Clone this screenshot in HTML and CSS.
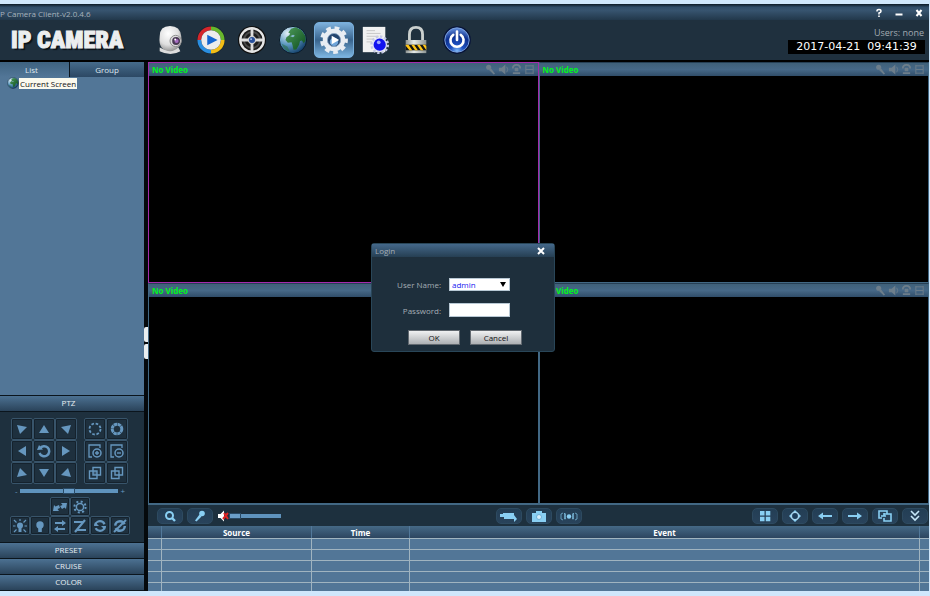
FILE: index.html
```html
<!DOCTYPE html>
<html lang="en">
<head>
    <meta charset="UTF-8">
    <meta name="viewport" content="width=device-width, initial-scale=1.0">
    <title>IP Camera Client</title>
    <link rel="stylesheet" href="styles.css">
</head>
<body>

<!-- shared icon shapes -->
<svg class="defs" width="0" height="0">
    <defs>
        <radialGradient id="blue-ball" cx="50%" cy="95%" r="90%">
            <stop offset="0" stop-color="#7fb8f5"/><stop offset=".3" stop-color="#1c4fc0"/><stop offset=".7" stop-color="#0d2f8c"/><stop offset="1" stop-color="#5c86d6"/>
        </radialGradient>
        <radialGradient id="white-ball" cx="40%" cy="30%" r="75%">
            <stop offset="0" stop-color="#fff"/><stop offset=".6" stop-color="#dedede"/><stop offset="1" stop-color="#8a8a8a"/>
        </radialGradient>
        <radialGradient id="sea" cx="30%" cy="25%" r="85%">
            <stop offset="0" stop-color="#e4f1f8"/><stop offset=".5" stop-color="#5c98c0"/><stop offset="1" stop-color="#0b3560"/>
        </radialGradient>
        <linearGradient id="land" x1="0" y1="0" x2="1" y2="1">
            <stop offset="0" stop-color="#4f9c5c"/><stop offset="1" stop-color="#0c4d1c"/>
        </linearGradient>
        <linearGradient id="steel" x1="0" y1="0" x2="1" y2="0">
            <stop offset="0" stop-color="#8f9594"/><stop offset=".4" stop-color="#e6eae8"/><stop offset="1" stop-color="#8b9291"/>
        </linearGradient>
    </defs>
    <symbol id="i-globe" viewBox="0 0 32 32">
        <circle cx="16" cy="16" r="14.5" fill="url(#sea)" stroke="#0a1a26"/>
        <path d="M14 4l5-1.500 6 3 4 6 .5 5-2 3-2-3-2 .5-1 4-3 5-3 .5-1-5-1-3-4 .5-2.500-3 1-3 3-2 1-2-2-1z" fill="url(#land)"/>
        <path d="M13 12l3-1.500 2 1-2 1.500z" fill="#8ab9d4"/>
        <path d="M4 20q2 7 9 9l-3-6z" fill="#2b6f4a" opacity=".6"/>
    </symbol>
    <symbol id="i-mic" viewBox="0 0 12 12">
        <circle cx="8" cy="3.5" r="2.8"/><path d="M5.5 4.5L7.500 6.500 2.500 11.500 1 10.500z"/>
    </symbol>
    <symbol id="i-speaker" viewBox="0 0 12 12">
        <path d="M1 4h3l4-3.500v11L4 8H1z"/><path d="M9.500 3q2 3 0 6" fill="none" stroke="currentColor"/>
    </symbol>
    <symbol id="i-talk" viewBox="0 0 12 12">
        <path d="M2 5q0-4 4-4t4 4" fill="none" stroke="currentColor" stroke-width="2"/><path d="M4 4h4v4H4zM2 9h8v2H2z"/>
    </symbol>
    <symbol id="i-record" viewBox="0 0 12 12">
        <path d="M2 1v10M10 1v10M2 2h8M2 6h8M2 10h8" fill="none" stroke="currentColor"/>
    </symbol>
    <symbol id="i-tri" viewBox="0 0 14 14"><path d="M7 3l5 8H2z"/></symbol>
    <symbol id="i-corner" viewBox="0 0 14 14"><path d="M2 3l10 2-7 7z"/></symbol>
</svg>

<div class="app">
    <div class="titlebar">
        <span class="title">P Camera Client-v2.0.4.6</span>
        <div class="window-buttons">
            <button type="button" aria-label="Help"><svg viewBox="0 0 10 10"><path d="M3 3.500V3q0-1.500 2-1.500T7 3.200Q7 4.200 5 5v1.500" fill="none" stroke="#fff" stroke-width="1.500"/><path d="M4.200 7.500h1.600V9H4.200z"/></svg></button>
            <button type="button" aria-label="Minimize"><svg viewBox="0 0 10 10"><path d="M1.500 5.500h7v2h-7z"/></svg></button>
            <button type="button" aria-label="Close"><svg viewBox="0 0 10 10"><path d="M2.500 2l5 6M7.500 2l-5 6" stroke="#fff" stroke-width="2"/></svg></button>
        </div>
    </div>

    <header class="header">
        <h1 class="logo">IP CAMERA</h1>
        <nav class="nav">
            <button type="button" aria-label="Camera"><svg viewBox="0 0 32 32">
                <path d="M5 24q8 5 20 0l2 4q-10 6-22 0z" fill="#ddd"/>
                <path d="M5 12Q5 1 16 1t12 11q1 8-2 11-5 5-10 5T7 24q-3-4-2-12z" fill="url(#white-ball)"/>
                <circle cx="22" cy="17" r="6" fill="#ddd" stroke="#8a8a8a"/><circle cx="22.500" cy="17" r="4.200" fill="#4a3a55"/><circle cx="23" cy="17" r="2.200" fill="#a56cc0"/><circle cx="21.500" cy="15.500" r="1" fill="#fff"/>
            </svg></button>
            <button type="button" aria-label="Playback"><svg viewBox="0 0 32 32">
                <circle cx="16" cy="16" r="15" fill="#14212c"/>
                <g fill="none" stroke-width="4"><path d="M3.500 16A12.500 12.500 0 0 1 16 3.500" stroke="#d5262b"/><path d="M16 3.500A12.500 12.500 0 0 1 28.500 16" stroke="#68b72c"/><path d="M28.500 16A12.500 12.500 0 0 1 16 28.500" stroke="#f2bd16"/><path d="M16 28.500A12.500 12.500 0 0 1 3.500 16" stroke="#2a8ee0"/></g>
                <circle cx="16" cy="16" r="10.500" fill="#ececec"/><path d="M12 10.500L23 16l-11 5.500z" fill="#1465cf"/>
            </svg></button>
            <button type="button" aria-label="PTZ control"><svg viewBox="0 0 32 32">
                <circle cx="16" cy="16" r="15" fill="#101010"/>
                <circle cx="16" cy="16" r="12.500" fill="#1c1c1c" stroke="#e6e6e6" stroke-width="2.500"/>
                <circle cx="16" cy="16" r="8.500" fill="none" stroke="#4a4a4a" stroke-width="2"/>
                <path d="M16 4v24M4 16h24" stroke="#dedede" stroke-width="3"/>
                <circle cx="16" cy="16" r="4.500" fill="#d2d2d2"/><circle cx="16" cy="16" r="3.200" fill="#274f9b"/><circle cx="15" cy="15" r="1" fill="#b8cff5"/>
            </svg></button>
            <button type="button" aria-label="Network"><svg><use href="#i-globe"/></svg></button>
            <button type="button" class="active" aria-label="Settings"><svg viewBox="0 0 32 32">
                <circle cx="16" cy="16" r="12.800" fill="none" stroke="#e8edf3" stroke-width="4" stroke-dasharray="5 3.936" stroke-dashoffset="2"/>
                <circle cx="16" cy="16" r="9.500" fill="none" stroke="#e8edf3" stroke-width="5"/>
                <circle cx="16" cy="16" r="7" fill="#23456f" stroke="#8ea6c2"/><circle cx="16" cy="18" r="4.500" fill="#6fa5da"/><path d="M13.500 11.500l8 4.500-8 4.500z" fill="#fff"/>
            </svg></button>
            <button type="button" aria-label="Log"><svg viewBox="0 0 32 32">
                <path d="M3 2h24v27H3z" fill="#f1f1f1"/><path d="M7 6h9M7 9h15M7 12h13M7 15h8M7 18h6" stroke="#c4c4c4"/>
                <circle cx="21" cy="21" r="8.500" fill="none" stroke="#c5c9e4" stroke-width="3" stroke-dasharray="2.500 1.950"/><circle cx="21" cy="21" r="7.800" fill="#dfe3f6"/><circle cx="21" cy="21" r="6.500" fill="#1212f0"/><circle cx="20" cy="18.500" r="2" fill="#9fa7ff"/>
            </svg></button>
            <button type="button" aria-label="Lock"><svg viewBox="0 0 32 32">
                <path d="M9 17V10q0-7.500 7-7.500t7 7.500v7" fill="none" stroke="#cbd0ce" stroke-width="3"/><path d="M5 16h22v14H5z" fill="url(#steel)"/>
                <path d="M5 21h22v6H5z" fill="#151515"/><path d="M5 21h3l4 6H9l-4-5zM11 21h3l4 6h-3zM17 21h3l4 6h-3zM23 21h3l1 2v4z" fill="#ffc515"/>
            </svg></button>
            <button type="button" aria-label="Exit"><svg viewBox="0 0 32 32">
                <circle cx="16" cy="16" r="14.800" fill="#08143a"/><circle cx="16" cy="16" r="13" fill="url(#blue-ball)" stroke="#7ea4df"/>
                <path d="M12 10.500a7 7 0 1 0 8 0M16 7v9" fill="none" stroke="#fff" stroke-width="2.800" stroke-linecap="round"/>
            </svg></button>
        </nav>
        <div class="status">
            <span class="users">Users: none</span>
            <time class="clock">2017-04-21&nbsp; 09:41:39</time>
        </div>
    </header>

    <main class="main">
        <aside class="sidebar">
            <div class="tabs">
                <button type="button" class="selected">List</button>
                <button type="button">Group</button>
            </div>
            <div class="tree">
                <a class="tree-item" href="#"><svg><use href="#i-globe"/></svg><span>Current Screen</span></a>
            </div>
            <button type="button" class="section">PTZ</button>
            <div class="ptz">
                <div class="pads">
                    <div class="pad pad-3">
                        <button type="button" aria-label="Up left"><svg><use href="#i-corner"/></svg></button>
                        <button type="button" aria-label="Up"><svg><use href="#i-tri"/></svg></button>
                        <button type="button" aria-label="Up right"><svg class="flip-x"><use href="#i-corner"/></svg></button>
                        <button type="button" aria-label="Left"><svg class="rot-l"><use href="#i-tri"/></svg></button>
                        <button type="button" aria-label="Auto"><svg viewBox="0 0 14 14"><path d="M3 4.500A5 5 0 1 1 2.500 9" fill="none" stroke="currentColor" stroke-width="2.500"/><path d="M0 6l6-.5L2 1z"/></svg></button>
                        <button type="button" aria-label="Right"><svg class="rot-r"><use href="#i-tri"/></svg></button>
                        <button type="button" aria-label="Down left"><svg class="flip-y"><use href="#i-corner"/></svg></button>
                        <button type="button" aria-label="Down"><svg class="flip-y"><use href="#i-tri"/></svg></button>
                        <button type="button" aria-label="Down right"><svg class="flip-xy"><use href="#i-corner"/></svg></button>
                    </div>
                    <div class="pad pad-2">
                        <button type="button" aria-label="Iris open"><svg viewBox="0 0 14 14"><circle cx="7" cy="7" r="5.500" fill="none" stroke="currentColor" stroke-width="1.800" stroke-dasharray="2.600 1.720"/></svg></button>
                        <button type="button" aria-label="Iris close"><svg viewBox="0 0 14 14"><circle cx="7" cy="7" r="4.800" fill="none" stroke="currentColor" stroke-width="3" stroke-dasharray="3.300 .470"/></svg></button>
                        <button type="button" aria-label="Zoom in"><svg viewBox="0 0 14 14"><path d="M12 4V1H1v12h3" fill="none" stroke="currentColor" stroke-width="1.300"/><circle cx="9" cy="9" r="4" fill="none" stroke="currentColor" stroke-width="1.500"/><path d="M8.300 7h1.400v4H8.300zM7 8.300h4v1.400H7z"/></svg></button>
                        <button type="button" aria-label="Zoom out"><svg viewBox="0 0 14 14"><path d="M12 4V1H1v12h3" fill="none" stroke="currentColor" stroke-width="1.300"/><circle cx="9" cy="9" r="4" fill="none" stroke="currentColor" stroke-width="1.500"/><path d="M7 8.300h4v1.400H7z"/></svg></button>
                        <button type="button" aria-label="Focus near"><svg viewBox="0 0 14 14"><path d="M5 1.500h7.500V9H5zM1.500 5H9v7.500H1.500z" fill="none" stroke="currentColor" stroke-width="1.400"/><path d="M5 5h4v4H5z" opacity=".4"/></svg></button>
                        <button type="button" aria-label="Focus far"><svg viewBox="0 0 14 14"><path d="M5 1.500h7.500V9H5zM1.500 5H9v7.500H1.500z" fill="none" stroke="currentColor" stroke-width="1.400"/></svg></button>
                    </div>
                </div>
                <label class="speed"><span>-</span><input type="range" min="0" max="100" value="50" aria-label="Speed"><span>+</span></label>
                <div class="pad pad-row">
                    <button type="button" aria-label="Scan"><svg viewBox="0 0 14 14"><path d="M0 11l1-6 1.500 1.500L6 5l1 3-2.500 1L6 11zM14 3l-1 6-1.500-1.500L9 9 7 6l2.500-1L8 3z"/></svg></button>
                    <button type="button" aria-label="Brightness"><svg viewBox="0 0 14 14"><circle cx="7" cy="7" r="3.600" fill="none" stroke="currentColor" stroke-width="1.500"/><circle cx="7" cy="7" r="5.600" fill="none" stroke="currentColor" stroke-width="2" stroke-dasharray="2 2.398"/></svg></button>
                </div>
                <div class="pad pad-row">
                    <button type="button" aria-label="Light on"><svg viewBox="0 0 14 14"><circle cx="7" cy="6.500" r="3"/><path d="M5.500 8h3v5h-3z"/><path d="M7 0v2M1 1l2.500 2.500M13 1l-2.500 2.500M0 7h2.500M11.500 7H14M1 13l2.500-2.500M13 13l-2.500-2.500" stroke="currentColor" stroke-width="1.200"/></svg></button>
                    <button type="button" aria-label="Light off"><svg viewBox="0 0 14 14"><circle cx="7" cy="6" r="3.700"/><path d="M5.200 8h3.600v5H5.200z"/></svg></button>
                    <button type="button" aria-label="Pan"><svg viewBox="0 0 14 14"><path d="M2 3h7V1l4 3-4 3V5H2zM12 9H5V7L1 10l4 3v-2h7z"/></svg></button>
                    <button type="button" aria-label="Stop pan"><svg viewBox="0 0 14 14"><path d="M1 3h9M4 11h9M12 1L2 13" stroke="currentColor" stroke-width="2.200"/></svg></button>
                    <button type="button" aria-label="Rotate"><svg viewBox="0 0 14 14"><circle cx="7" cy="7" r="4.800" fill="none" stroke="currentColor" stroke-width="2.200" stroke-dasharray="12.500 2.580"/><path d="M1 7h5L2 3zM13 7H8l4 4z"/></svg></button>
                    <button type="button" aria-label="Stop rotate"><svg viewBox="0 0 14 14"><circle cx="7" cy="7" r="4.800" fill="none" stroke="currentColor" stroke-width="2.500" stroke-dasharray="12.500 2.580"/><path d="M13 1L1 13" stroke="currentColor" stroke-width="2"/></svg></button>
                </div>
            </div>
            <button type="button" class="section">PRESET</button>
            <button type="button" class="section">CRUISE</button>
            <button type="button" class="section">COLOR</button>
        </aside>

        <div class="splitter"><span></span><span></span></div>

        <div class="content">
            <div class="videos">
                <section class="video current"><div class="video-bar"><span>No Video</span><div class="video-tools"><svg class="flip-x"><use href="#i-mic"/></svg><svg><use href="#i-speaker"/></svg><svg><use href="#i-talk"/></svg><svg><use href="#i-record"/></svg></div></div></section>
                <section class="video"><div class="video-bar"><span>No Video</span><div class="video-tools"><svg class="flip-x"><use href="#i-mic"/></svg><svg><use href="#i-speaker"/></svg><svg><use href="#i-talk"/></svg><svg><use href="#i-record"/></svg></div></div></section>
                <section class="video"><div class="video-bar"><span>No Video</span><div class="video-tools"><svg class="flip-x"><use href="#i-mic"/></svg><svg><use href="#i-speaker"/></svg><svg><use href="#i-talk"/></svg><svg><use href="#i-record"/></svg></div></div></section>
                <section class="video"><div class="video-bar"><span>No Video</span><div class="video-tools"><svg class="flip-x"><use href="#i-mic"/></svg><svg><use href="#i-speaker"/></svg><svg><use href="#i-talk"/></svg><svg><use href="#i-record"/></svg></div></div></section>
            </div>

            <div class="toolbar">
                <div class="tools">
                    <button type="button" aria-label="Search"><svg viewBox="0 0 12 12"><circle cx="5.500" cy="5.500" r="3.500" fill="none" stroke="currentColor" stroke-width="2"/><path d="M8 8l3 3" stroke="currentColor" stroke-width="2.400"/></svg></button>
                    <button type="button" aria-label="Talk"><svg><use href="#i-mic"/></svg></button>
                    <label class="volume">
                        <svg viewBox="0 0 12 12"><path d="M1 4h2.500L7 .5v11L3.500 8H1z" fill="#fff"/><path d="M7 3l4 6M11 3L6 9" stroke="#d22" stroke-width="2"/></svg>
                        <input type="range" min="0" max="100" value="0" aria-label="Volume">
                    </label>
                </div>
                <div class="tools">
                    <button type="button" aria-label="Record"><svg class="wide" viewBox="0 0 18 12"><path d="M0 4h3V3h11v2l3 4-3 3V9H4V7H0z"/></svg></button>
                    <button type="button" aria-label="Snapshot"><svg class="wide" viewBox="0 0 18 12"><path d="M2 3h4V1h6v2h4v9H2z"/><circle cx="9" cy="7" r="2.500" fill="#d5effc" stroke="#6fb0d8"/></svg></button>
                    <button type="button" aria-label="Alarm"><svg class="wide" viewBox="0 0 18 12"><path d="M3 3L1 4v5l2 1M4.500 3v6h1V4zM15 3l2 1v5l-2 1M13.500 3v6h-1V4z" fill="none" stroke="currentColor" opacity=".65"/><circle cx="9" cy="6.500" r="2.200"/></svg></button>
                </div>
                <div class="tools">
                    <button type="button" aria-label="Four views"><svg viewBox="0 0 12 12"><path d="M1 1h4.500v4.500H1zM6.800 1h4.500v4.500H6.800zM1 6.800h4.500v4.500H1zM6.800 6.800h4.500v4.500H6.800z"/></svg></button>
                    <button type="button" aria-label="Full screen"><svg viewBox="0 0 12 12"><path d="M6 0l3 3H3zM12 6L9 9V3zM6 12L3 9h6zM0 6l3-3v6z"/><circle cx="6" cy="6" r="3.600" fill="#1e3d5a" stroke="#a9d5ee" stroke-width="1.400"/></svg></button>
                    <button type="button" aria-label="Previous"><svg class="wide" viewBox="0 0 18 12"><path d="M2 6l5-3.500V5h9v2H7v2.500z"/></svg></button>
                    <button type="button" aria-label="Next"><svg class="wide" viewBox="0 0 18 12"><path d="M16 6l-5-3.500V5H2v2h9v2.500z"/></svg></button>
                    <button type="button" aria-label="Cycle"><svg class="wide" viewBox="0 0 18 12"><path d="M6 8H3V1h8v3M8 4h7v7H8V8M5 6h5M8 3v3" fill="none" stroke="currentColor" stroke-width="1.600"/></svg></button>
                    <button type="button" aria-label="Collapse"><svg viewBox="0 0 12 12"><path d="M2 1l4 4 4-4M2 6l4 4 4-4" fill="none" stroke="#c6e7f8" stroke-width="1.600"/></svg></button>
                </div>
            </div>

            <table class="events">
                <colgroup><col class="c-flag"><col class="c-source"><col class="c-time"><col><col class="c-end"></colgroup>
                <thead><tr><th></th><th>Source</th><th>Time</th><th>Event</th><th></th></tr></thead>
                <tbody>
                    <tr><td></td><td></td><td></td><td></td><td></td></tr>
                    <tr><td></td><td></td><td></td><td></td><td></td></tr>
                    <tr><td></td><td></td><td></td><td></td><td></td></tr>
                    <tr><td></td><td></td><td></td><td></td><td></td></tr>
                    <tr><td></td><td></td><td></td><td></td><td></td></tr>
                </tbody>
            </table>
        </div>
    </main>
</div>

<form class="login">
    <div class="login-bar">
        <span>Login</span>
        <button type="button" aria-label="Close login"><svg viewBox="0 0 10 10"><path d="M2 2l6 6M8 2L2 8" stroke="#fff" stroke-width="2"/></svg></button>
    </div>
    <div class="fields">
        <label for="user">User Name:</label>
        <div class="select"><select id="user"><option>admin</option></select></div>
        <label for="password">Password:</label>
        <input type="password" id="password">
    </div>
    <div class="actions">
        <button type="button">OK</button>
        <button type="button">Cancel</button>
    </div>
</form>

</body>
</html>
```

FILE: styles.css
```css
* {
    box-sizing: border-box;
}
body {
    margin: 0;
    height: 100vh;
    padding: 4px 1px 5px 0;
    display: flex;
    background: #cfe7fc;
    font-family: "Open Sans", "Noto Sans", sans-serif;
    font-size: 8px;
    color: #dfe8ef;
}
button {
    margin: 0;
    padding: 0;
    border: 0;
    background: none;
    color: inherit;
    font: inherit;
    display: flex;
    align-items: center;
    justify-content: center;
}
svg {
    display: block;
    fill: currentColor;
}
.defs {
    position: absolute;
}
.app {
    flex: 1;
    min-width: 0;
    display: flex;
    flex-direction: column;
    background: #000;
}

/* title bar and header */
.titlebar {
    height: 16px;
    padding-top: 2px;
    display: flex;
    align-items: center;
    justify-content: space-between;
    background: linear-gradient(#0b1a26, #2f4d69 20%, #37546f 40%, #22384b);
}
.title {
    color: #a7b3bd;
}
.window-buttons {
    display: flex;
}
.window-buttons button {
    width: 20px;
    height: 12px;
    color: #fff;
}
.window-buttons svg {
    width: 10px;
    height: 10px;
}
.header {
    height: 40px;
    display: flex;
    align-items: center;
    background: #1f303e;
}
.logo {
    width: 150px;
    margin: 0;
    padding-left: 11px;
    font-family: Impact, "Roboto Condensed", Roboto, sans-serif;
    font-size: 24px;
    line-height: 38px;
    font-weight: 900;
    white-space: nowrap;
    color: #eceeef;
    -webkit-text-stroke: 1px #eceeef;
    text-shadow: 2px 2px 1px #0a1218;
}
.nav {
    flex: 1;
    display: flex;
    gap: 1px;
}
.nav button {
    width: 40px;
    height: 36px;
    border: 1px solid transparent;
    border-radius: 5px;
}
.nav .active {
    border-color: #78aedb;
    background: linear-gradient(#7db0dc, #39648d 50%, #7cb4e0);
}
.nav svg {
    width: 30px;
    height: 30px;
}
.status {
    padding: 0 4px;
    display: flex;
    flex-direction: column;
    align-items: flex-end;
}
.users {
    padding-right: 1px;
    font-size: 9px;
    line-height: 14px;
    color: #a3abb2;
}
.clock {
    width: 137px;
    background: #000;
    color: #fff;
    font-family: "DejaVu Sans", sans-serif;
    font-size: 11px;
    line-height: 14px;
    text-align: center;
    white-space: nowrap;
}
.main {
    flex: 1;
    min-height: 0;
    padding-top: 2px;
    display: flex;
}

/* sidebar */
.sidebar {
    width: 144px;
    padding-bottom: 1px;
    display: flex;
    flex-direction: column;
    gap: 1px;
    background: #0b151d;
}
.tabs {
    height: 15px;
    display: grid;
    grid-template-columns: 69px 1fr;
    gap: 1px;
}
.tabs button {
    background: linear-gradient(#466b8b, #2c4864);
}
.tabs .selected {
    background: linear-gradient(#3e6280, #527697);
    padding-right: 6px;
}
.tree {
    flex: 1;
    margin-top: -1px;
    background: #527697;
}
.tree-item {
    padding-left: 7px;
    display: flex;
    align-items: center;
    color: #111;
    text-decoration: none;
}
.tree-item svg {
    width: 12px;
    height: 12px;
}
.tree-item span {
    padding: 0 1px;
    background: #fbfaee;
    line-height: 11px;
}
.section {
    height: 15px;
    padding: 0 7px 1px 0;
    line-height: 14px;
    background: linear-gradient(#4c7192, #2a435a);
    color: #e8eef2;
}
.ptz {
    height: 130px;
    padding: 6px 15px 0 11px;
    background: #1e303e;
    color: #6697bf;
}
.pads {
    display: flex;
    gap: 7px;
}
.pad {
    display: grid;
    grid-auto-rows: 22px;
}
.pad-3 {
    grid-template-columns: repeat(3, 22px);
}
.pad-2 {
    grid-template-columns: repeat(2, 22px);
}
.pad-row {
    grid-auto-rows: 19px;
    grid-auto-columns: 20px;
    grid-auto-flow: column;
    justify-content: center;
}
.pad button {
    border: 1px solid #38546a;
    border-radius: 2px;
    outline: 1px solid #15222d;
    outline-offset: -2px;
}
.pad svg {
    width: 14px;
    height: 14px;
}
.flip-x {
    transform: scaleX(-1);
}
.flip-y {
    transform: scaleY(-1);
}
.flip-xy {
    transform: scale(-1);
}
.rot-l {
    transform: rotate(-90deg);
}
.rot-r {
    transform: rotate(90deg);
}
.speed {
    height: 13px;
    padding: 0 4px;
    display: flex;
    align-items: center;
    gap: 2px;
}
input[type="range"] {
    appearance: none;
    min-width: 0;
    height: 4px;
    margin: 0;
    background: #5f93bd;
}
input[type="range"]::-webkit-slider-thumb {
    appearance: none;
    width: 12px;
    height: 6px;
    background: #6b9fca;
    border: 1px solid #294a66;
}
.speed input {
    flex: 1;
}

.splitter {
    width: 4px;
    display: flex;
    flex-direction: column;
    justify-content: center;
    gap: 2px;
    padding-top: 32px;
    background: #05090c;
}
.splitter span {
    height: 15px;
    background: #e9eef0;
    border-radius: 2px 0 0 2px;
}

/* video grid */
.content {
    flex: 1;
    min-width: 0;
    display: flex;
    flex-direction: column;
}
.videos {
    flex: 1;
    display: grid;
    grid-template: 1fr 1fr / 1fr 1fr;
}
.video {
    border: 1px solid #426884;
    border-top-color: #263f54;
    background: #000;
}
.video.current {
    border-color: #a42bad;
}
.video-bar {
    height: 13px;
    padding: 0 3px;
    display: flex;
    align-items: center;
    justify-content: space-between;
    background: linear-gradient(#3f6079, #466887 50%, #304d69);
    color: #00f51c;
    font-weight: bold;
}
.video-tools {
    display: flex;
    gap: 2px;
    color: #6d7e8b;
}
.video-tools svg {
    width: 11px;
    height: 11px;
}

/* toolbar */
.toolbar {
    height: 22px;
    padding: 0 1px;
    display: grid;
    grid-template-columns: 1fr auto 1fr;
    align-items: center;
    background: #1d303e;
    border-top: 1px solid #426884;
}
.tools {
    display: flex;
    align-items: center;
    gap: 4px;
}
.tools:first-child {
    padding-left: 8px;
}
.tools:last-child {
    justify-content: flex-end;
}
.tools button {
    width: 26px;
    height: 16px;
    border: 1px solid #2d4a60;
    border-radius: 5px;
    background: linear-gradient(#233e55, #29435b);
    color: #89cff3;
}
.tools svg {
    width: 12px;
    height: 12px;
}
.tools .wide {
    width: 18px;
}
.volume {
    display: flex;
    align-items: center;
}
.volume input {
    width: 52px;
}

/* event list */
.events {
    width: 100%;
    table-layout: fixed;
    border-collapse: separate;
    border-spacing: 0;
    background: #527697;
}
.c-flag {
    width: 14px;
}
.c-source {
    width: 150px;
}
.c-time {
    width: 98px;
}
.c-end {
    width: 9px;
}
.events th {
    height: 12px;
    padding: 0;
    line-height: 11px;
    color: #fff;
    background: linear-gradient(#456986, #2c4560);
    border-right: 1px solid #52789a;
}
.events td {
    height: 11px;
    padding: 0;
    border-top: 1px solid #a0b4c0;
    border-right: 1px solid #a0b4c0;
}
.events tr > :last-child {
    border-right: 0;
}
.events tbody tr:last-child td {
    height: 9px;
}

/* login window */
.login {
    position: absolute;
    left: calc(50% - 94px);
    top: calc(50% - 55px);
    width: 184px;
    height: 109px;
    border: 1px solid #294658;
    border-radius: 3px;
    background: #1e2f3c;
    color: #a4adb4;
}
.login-bar {
    height: 13px;
    padding: 0 3px;
    display: flex;
    align-items: center;
    justify-content: space-between;
    background: linear-gradient(#44688a, #263f53);
}
.login-bar button {
    width: 21px;
}
.login-bar svg {
    width: 10px;
    height: 10px;
}
.fields {
    padding-top: 20px;
    display: grid;
    grid-template-columns: 69px 61px;
    grid-auto-rows: 14px;
    gap: 12px 8px;
    align-items: center;
}
.fields label {
    text-align: right;
}
.select {
    position: relative;
    height: 13px;
}
.select::after {
    content: "";
    position: absolute;
    right: 4px;
    top: 4px;
    border: 3px solid transparent;
    border-top: 5px solid #000;
    border-bottom: 0;
    pointer-events: none;
}
.fields select, .fields input {
    appearance: none;
    display: block;
    width: 100%;
    height: 100%;
    margin: 0;
    padding: 0 2px;
    border: 1px solid #b8c8d4;
    border-radius: 0;
    background: #fff;
    color: #1717f0;
    font: inherit;
}
.actions {
    margin-top: 13px;
    padding-left: 36px;
    display: flex;
    gap: 10px;
}
.actions button {
    width: 52px;
    height: 15px;
    border: 1px solid #626970;
    background: linear-gradient(#f0f1f2, #adb0b3);
    color: #111;
}
```
